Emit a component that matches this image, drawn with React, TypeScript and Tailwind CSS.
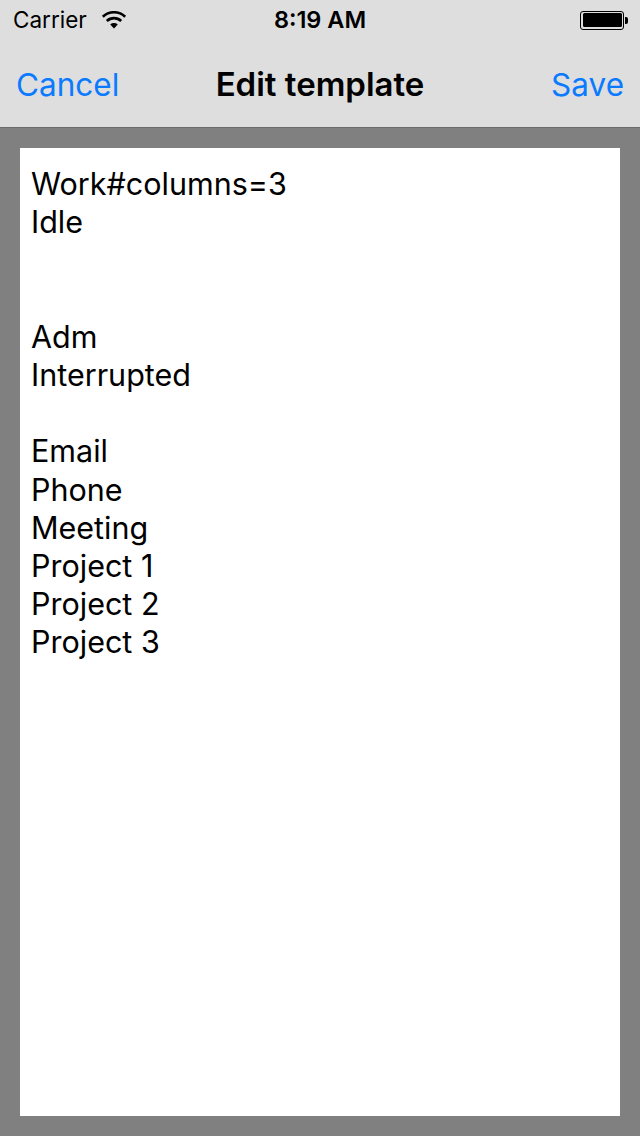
const lines = [
  "Work#columns=3",
  "Idle",
  "",
  "",
  "Adm",
  "Interrupted",
  "",
  "Email",
  "Phone",
  "Meeting",
  "Project 1",
  "Project 2",
  "Project 3",
];

function Wifi() {
  return (
    <svg width="26" height="18" viewBox="0 0 26 18" className="ml-[14px]">
      <path d="M13 17.5 L9.2 13.4 A5.6 5.6 0 0 1 16.8 13.4 Z" fill="black" />
      <path d="M5.8 10 A10.4 10.4 0 0 1 20.2 10" stroke="black" strokeWidth="2.6" fill="none" />
      <path d="M1.8 5.8 A16 16 0 0 1 24.2 5.8" stroke="black" strokeWidth="2.6" fill="none" />
    </svg>
  );
}

function Battery() {
  return (
    <div className="flex items-center">
      <div className="h-[19px] w-[44px] rounded-[3px] border border-black p-[1.5px]">
        <div className="h-full w-full rounded-[1.5px] bg-black" />
      </div>
      <div className="ml-[1px] h-[7px] w-[3px] rounded-r-[2px] bg-black" />
    </div>
  );
}

export default function App() {
  return (
    <div className="flex h-[1136px] w-[640px] flex-col bg-[#808080] font-['Inter',sans-serif]">
      <header className="bg-[#dedede] border-b border-[#6a6a6a]">
        <div className="relative flex h-[40px] items-center px-[13px] text-[22.5px] text-black">
          <span>Carrier</span>
          <Wifi />
          <span className="absolute left-1/2 -translate-x-1/2 text-[23.5px] font-semibold">8:19 AM</span>
          <div className="ml-auto mr-[-1px]">
            <Battery />
          </div>
        </div>
        <div className="relative flex h-[87px] items-center justify-between px-[16px] pt-[2px]">
          <button className="text-[31.5px] text-[#0a7aff]">Cancel</button>
          <h1 className="absolute left-1/2 -translate-x-1/2 text-[33px] font-semibold text-black">
            Edit template
          </h1>
          <button className="text-[31.5px] text-[#0a7aff]">Save</button>
        </div>
      </header>
      <main className="flex-1 px-[20px] pt-[20px] pb-[20px]">
        <div className="h-full bg-white px-[11px] pt-[17px] text-[30.5px] leading-[38.2px] text-black">
          {lines.map((line, i) => (
            <div key={i} className="h-[38.2px]">
              {line}
            </div>
          ))}
        </div>
      </main>
    </div>
  );
}
